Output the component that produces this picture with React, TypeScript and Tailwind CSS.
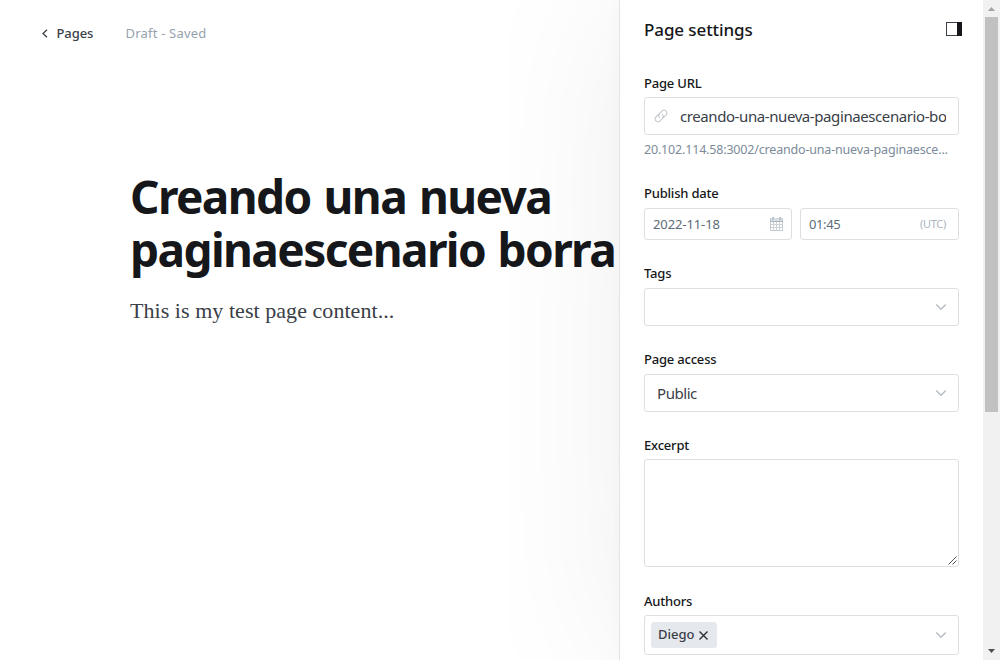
import React from 'react';

const labelCls = 'text-[13px] font-medium leading-[18px] tracking-[-0.2px] text-[#15171a] whitespace-nowrap';
const boxCls = 'box-border rounded-[3px] border border-[#dddfe2] bg-white';

function Chevron() {
  return (
    <svg width="12" height="8" viewBox="0 0 12 8" fill="none" stroke="#b4bcc5" strokeWidth="1.4">
      <path d="M1.2 1.4 6 6.2 10.8 1.4" />
    </svg>
  );
}

function LinkIcon() {
  return (
    <svg width="14" height="14" viewBox="0 0 24 24" fill="none" stroke="#c3c8cd" strokeWidth="1.8" strokeLinecap="round">
      <path d="M9.5 14.5a5 5 0 0 1 0-7.07l4-4a5 5 0 0 1 7.07 7.07l-2.5 2.5a5 5 0 0 1-3.5 1.4" />
      <path d="M14.5 9.5a5 5 0 0 1 0 7.07l-4 4a5 5 0 0 1-7.07-7.07l2.5-2.5a5 5 0 0 1 3.5-1.4" />
    </svg>
  );
}

function CalendarIcon() {
  return (
    <svg width="13" height="14" viewBox="0 0 13 14" fill="none" shapeRendering="crispEdges">
      <path d="M0 1h13v3H0z" fill="#d9dee2" />
      <path d="M.5 1v12.5h12V1" stroke="#c3cad0" />
      <path d="M0 4.5h13" stroke="#aab4bd" />
      <path d="M1 7.5h11M1 10.5h11M3.5 5v8M6.5 5v8M9.5 5v8" stroke="#cdd3d9" />
      <path d="M3 0v3M10 0v3" stroke="#bcc5cc" strokeWidth="2" />
    </svg>
  );
}

export default function App() {
  return (
    <div className="flex h-[660px] w-[1000px] overflow-hidden bg-white font-['Noto_Sans',sans-serif]">
      <main className="w-[619px] shrink-0">
        <header className="flex h-[66px] items-center pl-[42px]">
          <svg width="6" height="9" viewBox="0 0 6 9" fill="none" stroke="#394047" strokeWidth="1.3">
            <path d="M5 .7 1 4.5 5 8.3" />
          </svg>
          <span className="ml-[8.5px] w-[69px] whitespace-nowrap text-[13px] font-medium leading-[18px] tracking-[-0.1px] text-[#394047]">Pages</span>
          <span className="whitespace-nowrap text-[13px] leading-[18px] tracking-[0.2px] text-[#95a1ad]">Draft - Saved</span>
        </header>
        <h1 className="mt-[104px] whitespace-nowrap pl-[130px] text-[46px] font-bold leading-[53px] text-[#15171a]">
          <span className="block tracking-[-1.6px] [word-spacing:2.5px]">Creando una nueva</span>
          <span className="block tracking-[-1.6px] [word-spacing:2px]">paginaescenario borra</span>
        </h1>
        <p className="mt-[19px] whitespace-nowrap pl-[130px] font-['Liberation_Serif',serif] text-[22px] leading-[32px] tracking-[0.05px] text-[#394047]">This is my test page content...</p>
      </main>

      <aside className="relative flex w-[364px] shrink-0 flex-col border-l border-[#e3e3e3] bg-white px-[24px] shadow-[0_0_165px_rgba(0,0,0,.07),0_0_20px_rgba(0,0,0,.025)]">
        <div className="mt-[18px] flex h-[24px] w-[318px] items-start justify-between">
          <h2 className="whitespace-nowrap text-[17px] font-medium leading-[24px] tracking-[-0.1px] text-[#15171a]">Page settings</h2>
          <svg className="mt-[4px]" width="16" height="14" viewBox="0 0 16 14" shapeRendering="crispEdges">
            <path d="M.5.5h15v13H.5z" fill="#fff" stroke="#394047" />
            <path d="M11 0h5v14h-5z" fill="#15171a" />
          </svg>
        </div>

        <label className={`${labelCls} mt-[32px]`}>Page URL</label>
        <div className={`${boxCls} mt-[5px] flex h-[38px] w-[315px] items-center pl-[9px] pr-[12px]`}>
          <LinkIcon />
          <span className="ml-[12px] w-[267px] overflow-hidden whitespace-nowrap text-[15px] leading-[22px] tracking-[-0.41px] text-[#394047]">creando-una-nueva-paginaescenario-bo</span>
        </div>
        <p className="mt-[6px] whitespace-nowrap text-[12.5px] leading-[18px] tracking-[-0.18px] text-[#7c8b9a]">20.102.114.58:3002/creando-una-nueva-paginaesce...</p>

        <label className={`${labelCls} mt-[25px]`}>Publish date</label>
        <div className="mt-[6px] flex gap-[8px]">
          <div className={`${boxCls} flex h-[32px] w-[148px] items-center justify-between px-[8px]`}>
            <span className="text-[13px] leading-[18px] tracking-[-0.1px] text-[#5d6b79]">2022-11-18</span>
            <CalendarIcon />
          </div>
          <div className={`${boxCls} flex h-[32px] w-[159px] items-center justify-between pl-[8px] pr-[12px]`}>
            <span className="text-[13px] leading-[18px] tracking-[-0.4px] text-[#5d6b79]">01:45</span>
            <span className="text-[11px] leading-[16px] tracking-[-0.3px] text-[#abb4be]">(UTC)</span>
          </div>
        </div>

        <label className={`${labelCls} mt-[24px]`}>Tags</label>
        <div className={`${boxCls} mt-[6px] flex h-[38px] w-[315px] items-center justify-end pr-[11px]`}>
          <Chevron />
        </div>

        <label className={`${labelCls} mt-[24px]`}>Page access</label>
        <div className={`${boxCls} mt-[6px] flex h-[38px] w-[315px] items-center justify-between pl-[12px] pr-[11px]`}>
          <span className="text-[15px] leading-[22px] tracking-[-0.45px] text-[#394047]">Public</span>
          <Chevron />
        </div>

        <label className={`${labelCls} mt-[24px]`}>Excerpt</label>
        <div className={`${boxCls} mt-[5px] flex h-[108px] w-[315px] items-end justify-end p-px`}>
          <svg width="9" height="9" viewBox="0 0 9 9" stroke="#555" strokeWidth="1">
            <path d="M.5 8.5l8-8M4.5 8.5l4-4" />
          </svg>
        </div>

        <label className={`${labelCls} mt-[25px]`}>Authors</label>
        <div className={`${boxCls} mt-[5px] flex h-[40px] w-[315px] items-center justify-between pl-[6px] pr-[11px]`}>
          <span className="flex h-[26px] w-[66px] items-center rounded-[3px] bg-[#e5e9ed] pl-[7px] text-[13px] font-medium leading-[18px] text-[#394047]">
            <span className="w-[41px] pb-[2px]">Diego</span>
            <svg width="9" height="9" viewBox="0 0 9 9" stroke="#2b3036" strokeWidth="1.4">
              <path d="M.5.5l8 8M8.5.5l-8 8" />
            </svg>
          </span>
          <Chevron />
        </div>
      </aside>

      <div className="relative flex w-[17px] shrink-0 flex-col items-center bg-[#f1f1f1]">
        <svg className="mt-[7px] shrink-0" width="7" height="4" viewBox="0 0 7 4">
          <path d="M0 4 3.5 0 7 4z" fill="#a3a3a3" />
        </svg>
        <div className="mt-[6px] h-[395px] w-[13px] shrink-0 bg-[#c1c1c1]" />
        <svg className="mt-[237px] shrink-0" width="7" height="4" viewBox="0 0 7 4">
          <path d="M0 0 3.5 4 7 0z" fill="#505050" />
        </svg>
      </div>
    </div>
  );
}
